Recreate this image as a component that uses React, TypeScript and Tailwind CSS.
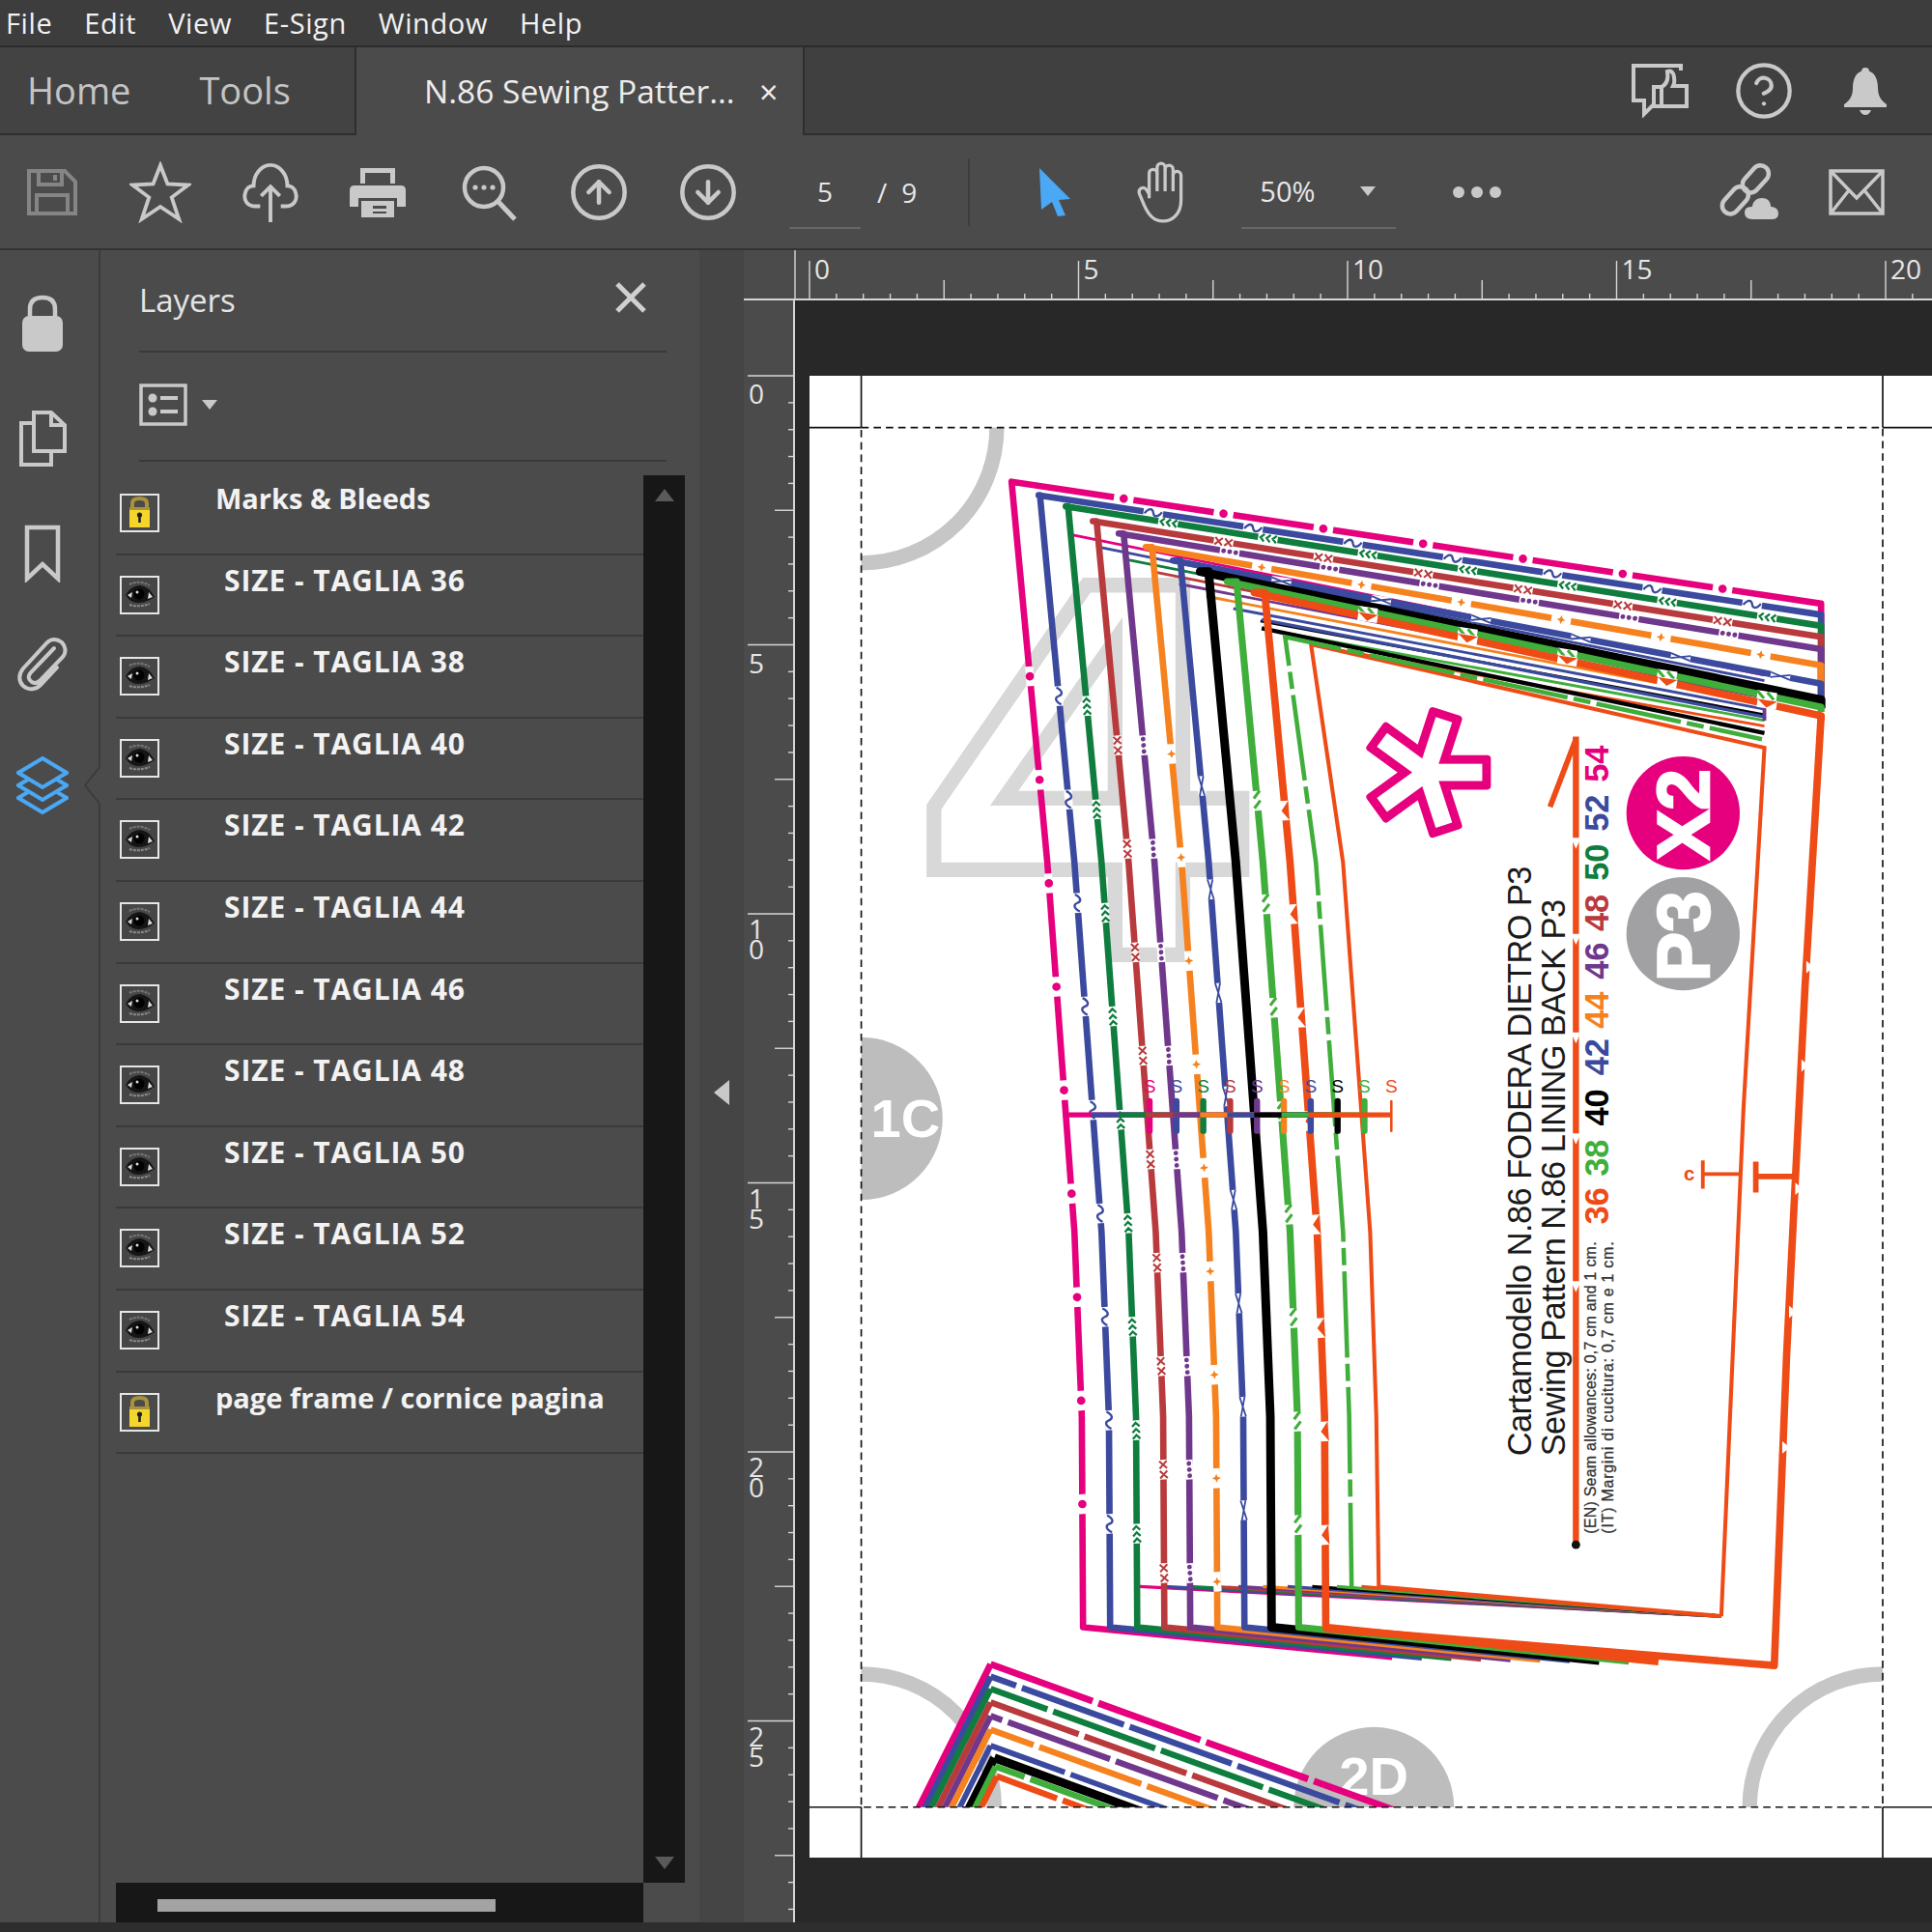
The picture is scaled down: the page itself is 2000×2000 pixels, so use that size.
import React from 'react';
import { CircleArrowDown, CircleArrowUp, CircleHelp } from 'lucide-react';

const MENU = ['File', 'Edit', 'View', 'E-Sign', 'Window', 'Help'];
const LAYERS = [36, 38, 40, 42, 44, 46, 48, 50, 52, 54];
const ICON = '#c9c9c9';

// pattern pieces are drawn in the coordinates of the page svg
const PINK = '#e6007e';
const BLUE = '#3b4a9e';
const GREEN = '#0f7d3e';
const BROWN = '#b83a3c';
const PURPLE = '#70388c';
const ORANGE = '#f5821f';
const BLACK = '#000000';
const LIME = '#3fae3a';
const RED = '#ee4b16';

const SIZES = [
  { n: 54, c: PINK, x: 821, y: 391, end: 490, w: 5.2, leftMark: 549, topMark: 912, mark: 'dot' },
  { n: 52, c: BLUE, x: 843, y: 402, end: 499, w: 5.2, leftMark: 565, topMark: 936, mark: 'tilde' },
  { n: 50, c: GREEN, x: 865, y: 411, end: 508, w: 5.2, leftMark: 573, topMark: 948, mark: 'chev' },
  { n: 48, c: BROWN, x: 887, y: 423, end: 517, w: 5.2, leftMark: 605, topMark: 993, mark: 'xx' },
  { n: 46, c: PURPLE, x: 908, y: 433, end: 527, w: 5.2, leftMark: 605, topMark: 998, mark: 'dots' },
  { n: 44, c: ORANGE, x: 930, y: 444, end: 540, w: 5.2, leftMark: 612, topMark: 1024, mark: 'star' },
  { n: 42, c: BLUE, x: 952, y: 455, end: 555, w: 5.2, leftMark: 638, topMark: 1040, mark: 'cross' },
  { n: 40, c: BLACK, x: 974, y: 464, end: 568, w: 7, leftMark: 0, topMark: 0, mark: '' },
  { n: 38, c: LIME, x: 996, y: 472, end: 574, w: 5.6, leftMark: 650, topMark: 1110, mark: 'slash' },
  { n: 36, c: RED, x: 1018, y: 481, end: 581, w: 6, leftMark: 658, topMark: 1110, mark: 'tri' },
];

// left edge of the biggest size, as x for a given y
const CURVE = [[391, 821], [700, 850], [1000, 872], [1150, 878], [1320, 879]];
const curveX = (y: number) => {
  for (let i = 0; i < CURVE.length - 1; i++) {
    const [y0, x0] = CURVE[i];
    const [y1, x1] = CURVE[i + 1];
    if (y <= y1) return x0 + ((y - y0) / (y1 - y0)) * (x1 - x0);
  }
  return 879;
};

const leftEdge = (dx: number, top: number, bottom: number) => {
  const ys = [bottom, 1150, 1000, 700, top].filter((y) => y <= bottom && y >= top);
  return ys.map((y) => `${curveX(y) + dx},${y}`).join(' ');
};

function Mark({ x, y, c, kind, w, angle }: { x: number; y: number; c: string; kind: string; w: number; angle: number }) {
  return (
    <g transform={`translate(${x} ${y}) rotate(${angle})`}>
      <rect x={-8} y={-w / 2 - 0.6} width={16} height={w + 1.2} fill="#fff" />
      {kind === 'dot' && <circle r={3.4} fill={c} />}
      {kind === 'tilde' && <path d="M-7 1.5 C-4 -3.5 -1 -3.5 0 0 S4 3.5 7 -1.5" fill="none" stroke={c} strokeWidth={1.8} />}
      {kind === 'chev' && <path d="M-3 -3 L-6 0 L-3 3 M2 -3 L-1 0 L2 3 M7 -3 L4 0 L7 3" fill="none" stroke={c} strokeWidth={1.8} />}
      {kind === 'xx' && <path d="M-7 -3 L-1 3 M-7 3 L-1 -3 M1 -3 L7 3 M1 3 L7 -3" fill="none" stroke={c} strokeWidth={1.6} />}
      {kind === 'dots' && (
        <g fill={c}>
          <circle cx={-5} r={1.9} />
          <circle r={1.9} />
          <circle cx={5} r={1.9} />
        </g>
      )}
      {kind === 'star' && <path d="M0 -3.6 L1.2 -1 L3.6 0 L1.2 1 L0 3.6 L-1.2 1 L-3.6 0 L-1.2 -1 Z" fill={c} />}
      {kind === 'cross' && <path d="M-8 -2 L8 2 M-8 2 L8 -2" fill="none" stroke={c} strokeWidth={1.4} />}
      {kind === 'slash' && <path d="M-8 -2.6 L-2 2.6 M0 -2.6 L6 2.6" fill="none" stroke={c} strokeWidth={2.4} />}
      {kind === 'tri' && <path d="M-8 -3 L8 -3 L0 3 Z" fill={c} />}
    </g>
  );
}

function SizeLine({ s, i }: { s: (typeof SIZES)[number]; i: number }) {
  const dx = s.x - 821;
  const slope = (s.end - s.y) / (1478 - s.x);
  const bottomEndX = 1130 + i * 24;
  const bottomEndY = 1345 + (i / 9) * 4;
  const left: number[] = [];
  if (s.mark) for (let y = s.leftMark; y < 1300; y += 84) left.push(y);
  const top: number[] = [];
  if (s.mark) for (let x = s.topMark; x < 1470; x += 81) top.push(x);
  return (
    <g>
      <polyline
        points={`${bottomEndX},${bottomEndY} ${leftEdge(dx, s.y, 1321)} ${s.x},${s.y} 1478,${s.end} 1478,${Math.max(s.end + 4, 575)}`}
        fill="none"
        stroke={s.c}
        strokeWidth={s.w}
        strokeLinejoin="round"
      />
      {left.map((y) => (
        <Mark key={`l${y}`} x={curveX(y) + dx} y={y} c={s.c} kind={s.mark} w={s.w} angle={86} />
      ))}
      {top.map((x) => (
        <Mark key={`t${x}`} x={x} y={s.y + (x - s.x) * slope} c={s.c} kind={s.mark} w={s.w} angle={8.6} />
      ))}
    </g>
  );
}

function NotchLine() {
  return (
    <g>
      {SIZES.map((s, i) => {
        const x = 933 + i * 21.8;
        const from = i === 0 ? 863 : 886 + (i - 1) * 22;
        return (
          <g key={s.n}>
            <line x1={from} y1={905} x2={x} y2={905} stroke={s.c} strokeWidth={4} />
            <line x1={x} y1={894} x2={x} y2={918} stroke={s.c} strokeWidth={i === 9 ? 2 : 5} strokeLinecap="round" />
            <text x={x} y={887} textAnchor="middle" fontSize={15} fill={s.c} className="font-['Liberation_Sans']">
              S
            </text>
          </g>
        );
      })}
    </g>
  );
}

function SecondPiece() {
  const rows = [
    [PINK, 1351, 5.5],
    [BLUE, 1361, 5],
    [GREEN, 1371, 5],
    [BROWN, 1382, 5],
    [PURPLE, 1393, 5],
    [ORANGE, 1404, 5],
    [BLUE, 1417, 4.5],
    [BLACK, 1427, 7],
    [LIME, 1434, 5],
    [RED, 1442, 5],
  ] as const;
  return (
    <g>
      {rows.map(([c, y, w], i) => {
        const cx = 804 + (i > 6 ? i - 4 : 0);
        return (
          <g key={i} fill="none" stroke={c} strokeWidth={w} strokeLinejoin="round">
            <line x1={cx} y1={y} x2={cx - 60} y2={y + 120} />
            <line x1={cx} y1={y} x2={1180} y2={y + 136} strokeDasharray={i === 7 ? undefined : '88 5'} strokeDashoffset={i * -27} />
          </g>
        );
      })}
    </g>
  );
}

function Asterisk() {
  const angles = [0, 72, 144, 216, 288];
  return (
    <g transform="translate(1158 627)">
      {angles.map((a) => (
        <rect key={a} x={0} y={-14} width={52} height={28} rx={3} fill={PINK} transform={`rotate(${a})`} />
      ))}
      {angles.map((a) => (
        <rect key={a} x={0} y={-7} width={45} height={14} fill="#fff" transform={`rotate(${a})`} />
      ))}
    </g>
  );
}

function PagePattern() {
  const sideNums = [
    [36, RED, 979],
    [38, LIME, 940],
    [40, BLACK, 899],
    [42, BLUE, 858],
    [44, ORANGE, 820],
    [46, PURPLE, 780],
    [48, BROWN, 741],
    [50, GREEN, 700],
    [52, BLUE, 660],
    [54, PINK, 620],
  ] as const;
  return (
    <svg viewBox="657 305 911 1203" preserveAspectRatio="none" className="block w-full h-full">
      <defs>
        <clipPath id="trim">
          <rect x={699} y={347} width={829} height={1120} />
        </clipPath>
      </defs>
      <g clipPath="url(#trim)">
        <circle cx={699} cy={347} r={110} fill="none" stroke="#c6c6c6" strokeWidth={12} />
        <circle cx={699} cy={1467} r={108} fill="none" stroke="#c6c6c6" strokeWidth={12} />
        <circle cx={1528} cy={1467} r={108} fill="none" stroke="#c6c6c6" strokeWidth={12} />
        <circle cx={699} cy={908} r={66} fill="#bdbdbd" />
        <text x={735} y={923} textAnchor="middle" fontSize={44} fontWeight={700} fill="#fff" className="font-['Liberation_Sans']">
          1C
        </text>
        <circle cx={1115} cy={1467} r={65} fill="#bdbdbd" />
        <text x={1115} y={1457} textAnchor="middle" fontSize={44} fontWeight={700} fill="#fff" className="font-['Liberation_Sans']">
          2D
        </text>
        <path
          d="M758 706 L758 655 L882 475 L960 475 L960 648 L1008 648 L1008 706 L960 706 L960 775 L905 775 L905 706 Z M815 648 L905 648 L905 520 Z"
          fill="none"
          stroke="#d8d8d8"
          strokeWidth={12}
        />

        {/* thin seam lines of every size */}
        {SIZES.map((s, i) => (
          <g key={s.n} fill="none" stroke={s.c} strokeWidth={2.2}>
            <line x1={869 + i * 22} y1={434 + i * 10} x2={1432} y2={548 + i * 4.6} />
            <line x1={925 + i * 20} y1={1288} x2={1397} y2={1312} strokeWidth={2.6} />
          </g>
        ))}
        <polyline points="1432,560 1432,585" fill="none" stroke={PURPLE} strokeWidth={3} />
        <line x1={1024} y1={510} x2={1432} y2={595} stroke={BLACK} strokeWidth={3.4} />
        <line x1={1024} y1={503} x2={1432} y2={582} stroke={BLUE} strokeWidth={2.6} />

        {SIZES.map((s, i) => (
          <SizeLine key={s.n} s={s} i={i} />
        ))}

        {/* inner cutting line */}
        <polyline
          points="1397,1312 1119,1288 1117,1150 1112,1000 1090,700 1064,523 1432,607 1415,900 1397,1312"
          fill="none"
          stroke={RED}
          strokeWidth={3.2}
        />
        <polyline points="1097,1290 1095,1150 1090,1000 1068,700 1043,517 1430,600" fill="none" stroke={LIME} strokeWidth={3.6} strokeDasharray="70 5 14 5" />
        <polyline points="1075,1322 1440,1352 1450,1100 1465,800 1478,581" fill="none" stroke={RED} strokeWidth={6} strokeLinejoin="round" />
        {[780, 860, 960, 1060, 1170].map((y) => (
          <path key={y} d={`M${1466 - (y - 780) * 0.05} ${y} l6 5 l-6 5 z`} fill="#fff" />
        ))}
        <NotchLine />

        <Asterisk />

        <circle cx={1366} cy={660} r={46} fill={PINK} />
        <text
          transform="translate(1387 661) rotate(-90)"
          textAnchor="middle"
          fontSize={60}
          fontWeight={700}
          fill="#fff"
          stroke="#fff"
          strokeWidth={2}
          className="font-['Liberation_Sans']"
        >
          X2
        </text>
        <circle cx={1366} cy={758} r={46} fill="#a1a1a4" />
        <text
          transform="translate(1387 760) rotate(-90)"
          textAnchor="middle"
          fontSize={60}
          fontWeight={700}
          fill="#fff"
          stroke="#fff"
          strokeWidth={2}
          className="font-['Liberation_Sans']"
        >
          P3
        </text>

        <g className="font-['Liberation_Sans']" fill="#1a1a1a">
          <text transform="translate(1243 1182) rotate(-90)" fontSize={27} textLength={479}>
            Cartamodello N.86 FODERA DIETRO P3
          </text>
          <text transform="translate(1270 1182) rotate(-90)" fontSize={27} textLength={452}>
            Sewing Pattern N.86 LINING BACK P3
          </text>
          <text transform="translate(1295 1245) rotate(-90)" fontSize={12.5} fill="#333" stroke="#333" strokeWidth={0.25} textLength={237}>
            (EN) Seam allowances: 0,7 cm and 1 cm.
          </text>
          <text transform="translate(1309 1245) rotate(-90)" fontSize={12.5} fill="#333" stroke="#333" strokeWidth={0.25} textLength={237}>
            (IT) Margini di cucitura: 0,7 cm e 1 cm.
          </text>
        </g>
        {sideNums.map(([n, c, y]) => (
          <text
            key={n}
            transform={`translate(1305 ${y}) rotate(-90)`}
            textAnchor="middle"
            fontSize={27}
            fontWeight={700}
            fill={c}
            className="font-['Liberation_Sans']"
          >
            {n}
          </text>
        ))}
        <line x1={1279} y1={1254} x2={1279} y2={598} stroke={RED} strokeWidth={5} />
        <line x1={1279} y1={600} x2={1258} y2={655} stroke={RED} strokeWidth={4.5} />
        <circle cx={1279} cy={1254} r={3.5} fill="#111" />
        {[1040, 920, 838, 758, 680].map((y) => (
          <path key={y} d={`M1275 ${y} l8 0 l-4 9 z`} fill="#fff" />
        ))}

        <g fill="none" stroke={RED}>
          <path d="M1382 942 V965 M1382 953 H1412" strokeWidth={3} />
          <path d="M1425 943 V968 M1425 955 H1455" strokeWidth={4.5} />
        </g>
        <text x={1371} y={958} textAnchor="middle" fontSize={16} fontWeight={700} fill={RED} className="font-['Liberation_Sans']">
          c
        </text>

        <SecondPiece />
      </g>
      <g fill="none" stroke="#111" strokeWidth={1.3}>
        <rect x={699} y={347} width={829} height={1120} strokeDasharray="6 4" />
        <path d="M699 305 V347 M1528 305 V347 M699 1467 V1508 M1528 1467 V1508 M657 347 H699 M1528 347 H1568 M657 1467 H699 M1528 1467 H1568" />
      </g>
    </svg>
  );
}

function TopRuler() {
  const ticks = Array.from({ length: 44 }, (_, i) => i);
  return (
    <svg width={1230} height={52} className="block">
      <g stroke="#d6d6d6" strokeWidth={1.4}>
        <line x1={0} y1={51} x2={1230} y2={51} strokeWidth={2} />
        <line x1={53} y1={0} x2={53} y2={51} />
        {ticks.map((i) => {
          const x = 68 + i * 27.85;
          const h = i % 10 === 0 ? 40 : i % 5 === 0 ? 20 : 6;
          return <line key={i} x1={x} y1={51 - h} x2={x} y2={51} />;
        })}
      </g>
      <g fill="#e6e6e6" fontSize={28} className="font-['Open_Sans']">
        {[0, 5, 10, 15, 20].map((n, i) => (
          <text key={n} x={73 + i * 278.5} y={30}>
            {n}
          </text>
        ))}
      </g>
    </svg>
  );
}

function SideRuler() {
  const ticks = Array.from({ length: 58 }, (_, i) => i);
  return (
    <svg width={53} height={1679} className="block">
      <g stroke="#d6d6d6" strokeWidth={1.4}>
        <line x1={52} y1={0} x2={52} y2={1679} strokeWidth={2} />
        {ticks.map((i) => {
          const y = 78 + i * 27.85;
          const w = i % 10 === 0 ? 48 : i % 5 === 0 ? 20 : 6;
          return <line key={i} x1={52 - w} y1={y} x2={52} y2={y} />;
        })}
      </g>
      <g fill="#e6e6e6" fontSize={28} className="font-['Open_Sans']" textAnchor="middle">
        {['0', '5', '10', '15', '20', '25'].map((n, i) => (
          <text key={n} x={13} y={i * 278.5 + 107}>
            {n.length === 2 ? (
              <>
                <tspan x={13} dy={-3}>
                  {n[0]}
                </tspan>
                <tspan x={13} dy={21}>
                  {n[1]}
                </tspan>
              </>
            ) : (
              n
            )}
          </text>
        ))}
      </g>
    </svg>
  );
}

const SaveIcon = () => (
  <svg width={54} height={52} viewBox="0 0 54 52" fill="none" stroke="#858585" strokeWidth={4}>
    <path d="M3 4 H40 L51 15 V48 H3 Z" />
    <path d="M13 4 V18 H37 V4 M30 8 V14 M11 48 V29 H43 V48" />
  </svg>
);

const StarIcon = () => (
  <svg width={64} height={64} viewBox="0 0 60 60" fill="none" stroke={ICON} strokeWidth={3.6} strokeLinejoin="miter">
    <path d="M30 4 L37 22 L57 23 L41 35 L48 56 L30 44 L12 56 L19 35 L3 23 L23 22 Z" />
  </svg>
);

const CloudUp = () => (
  <svg width={60} height={64} viewBox="0 0 60 66" fill="none" stroke={ICON} strokeWidth={4}>
    <path d="M19 48 H14 C5 48 1 41 3 34 C4 29 8 26 12 26 C12 14 20 4 30 4 C40 4 48 14 48 26 C52 26 56 29 57 34 C59 41 55 48 46 48 H41" />
    <path d="M30 65 V27 M20 37 L30 27 L40 37" />
  </svg>
);

const PrintIcon = () => (
  <svg width={60} height={54} viewBox="0 0 60 54" fill={ICON}>
    <path d="M12 2 H48 V18 H43 V7 H17 V18 H12 Z" />
    <path d="M6 20 H54 Q59 20 59 25 V42 H50 V33 H10 V42 H1 V25 Q1 20 6 20 Z" />
    <path fillRule="evenodd" d="M13 36 H47 V53 H13 Z M25 41 V44 H39 V41 Z M25 47 V49 H39 V47 Z" />
  </svg>
);

const SearchDots = () => (
  <svg width={60} height={60} viewBox="0 0 60 60" fill="none" stroke={ICON}>
    <circle cx={25} cy={25} r={20} strokeWidth={4.5} />
    <path d="M40 40 L57 58" strokeWidth={5} />
    <g fill={ICON} stroke="none">
      <circle cx={16} cy={25} r={2.6} />
      <circle cx={25} cy={25} r={2.6} />
      <circle cx={34} cy={25} r={2.6} />
    </g>
  </svg>
);

const PointerIcon = () => (
  <svg width={36} height={52} viewBox="0 0 36 52">
    <path d="M2 1 L34 33 L22 34 L29 50 L21 51 L15 36 L4 44 Z" fill="#4aa8f5" />
  </svg>
);

const HandIcon = () => (
  <svg width={58} height={66} viewBox="0 0 50 64" fill="none" stroke={ICON} strokeWidth={3.2} strokeLinejoin="round">
    <path d="M12 38 V13 a4 4 0 0 1 8 0 V7 a4 4 0 0 1 8 0 V9 a4 4 0 0 1 8 0 V15 a4 4 0 0 1 8 0 V40 C44 53 36 61 26 61 C16 61 11 54 7 45 L2 33 C1 28 6 26 9 29 L12 34" />
    <path d="M20 13 V31 M28 9 V31 M36 15 V31" />
  </svg>
);

const LinkCloud = () => (
  <svg width={66} height={62} viewBox="0 0 66 62" fill="none" stroke={ICON} strokeWidth={4.5}>
    <rect x={24} y={9} width={32} height={17} rx={8.5} transform="rotate(-48 40 17)" />
    <rect x={3} y={31} width={32} height={17} rx={8.5} transform="rotate(-48 19 39)" />
    <path d="M37 60 Q28 60 28 52 Q28 45 36 45 Q38 36 47 36 Q56 36 57 45 Q65 46 65 53 Q65 60 57 60 Z" fill={ICON} stroke="#4b4b4b" strokeWidth={2} />
  </svg>
);

const MailIcon = () => (
  <svg width={58} height={48} viewBox="0 0 58 48" fill="none" stroke={ICON} strokeWidth={3.5}>
    <rect x={2} y={2} width={54} height={44} />
    <path d="M2 2 L29 30 L56 2 M2 46 L21 22 M56 46 L37 22" />
  </svg>
);

const ThumbComment = () => (
  <svg width={60} height={56} viewBox="0 0 60 56" fill="none" stroke={ICON} strokeWidth={4}>
    <path d="M52 7 V2 H3 V38 H14 V52 L24 42" />
    <path d="M24 24 H32 V44 H24 Z M32 24 Q40 20 38 8 Q44 6 45 14 Q46 19 44 23 H58 V44 H32" />
  </svg>
);

const BellIcon = () => (
  <svg width={46} height={50} viewBox="0 0 46 50" fill={ICON}>
    <circle cx={23} cy={5} r={4} />
    <path d="M23 4 C32 4 36 12 36 22 C36 30 39 35 45 39 V42 H1 V39 C7 35 10 30 10 22 C10 12 14 4 23 4 Z" />
    <path d="M17 45 H29 Q27 50 23 50 Q19 50 17 45 Z" />
  </svg>
);

const NavLock = () => (
  <svg width={44} height={60} viewBox="0 0 44 60" fill={ICON}>
    <path d="M9 24 V15 Q9 3 22 3 Q35 3 35 15 V24" fill="none" stroke={ICON} strokeWidth={4.5} />
    <rect x={1} y={22} width={42} height={37} rx={7} />
  </svg>
);

const NavPages = () => (
  <svg width={50} height={58} viewBox="0 0 50 58" fill="none" stroke={ICON} strokeWidth={4}>
    <path d="M16 2 H34 L48 15 V42 H16 Z M34 2 V15 H48" />
    <path d="M16 13 H3 V56 H34 V42" />
  </svg>
);

const NavBookmark = () => (
  <svg width={38} height={60} viewBox="0 0 38 60" fill="none" stroke={ICON} strokeWidth={4.5}>
    <path d="M3 3 H35 V56 L19 41 L3 56 Z" />
  </svg>
);

const NavClip = () => (
  <svg width={52} height={58} viewBox="0 0 52 58" fill="none" stroke={ICON} strokeWidth={4} strokeLinecap="round">
    <path d="M38 12 L14 37 C10 42 12 45 15 47 C18 49 21 48 24 45 L47 21 C51 16 50 10 46 6 C41 2 35 2 31 6 L6 33 C1 39 1 46 6 51 C12 56 19 55 24 50 L41 32" />
  </svg>
);

const NavLayers = () => (
  <svg width={54} height={60} viewBox="0 0 54 60" fill="none" stroke="#4aa8f5" strokeWidth={4}>
    <path d="M27 2 L52 17 L27 32 L2 17 Z" />
    <path d="M12 24 L2 30 L27 45 L52 30 L42 24" />
    <path d="M12 37 L2 43 L27 58 L52 43 L42 37" />
  </svg>
);

const OptionsIcon = () => (
  <svg width={50} height={44} viewBox="0 0 50 44" fill="none" stroke={ICON} strokeWidth={3.5}>
    <rect x={2} y={2} width={46} height={40} />
    <g fill={ICON} stroke="none">
      <circle cx={14} cy={15} r={4.5} />
      <circle cx={14} cy={29} r={4.5} />
      <rect x={22} y={13} width={18} height={4} />
      <rect x={22} y={27} width={18} height={4} />
    </g>
  </svg>
);

const EyeBox = () => (
  <svg width={41} height={40} viewBox="0 0 41 40">
    <rect x={1} y={1} width={39} height={38} fill="#464646" stroke="#e6e6e6" strokeWidth={2} />
    <path d="M6 20 Q12 10 21 10 Q30 11 36 22 Q27 28 19 28 Q11 28 6 20 Z" fill="#151515" />
    <circle cx={20} cy={19} r={5.5} fill="#000" />
    <path d="M8 20 L13 17 L12 23 Z M30 17 L34 22 L29 24 Z" fill="#d8d8d8" />
    <circle cx={18} cy={17} r={1.5} fill="#ddd" />
    <path d="M10 30 Q20 33 31 29" stroke="#8a8a8a" strokeWidth={2} strokeDasharray="3 1" fill="none" />
    <path d="M10 9 Q20 4 31 10" stroke="#777" strokeWidth={2} strokeDasharray="3 1" fill="none" />
  </svg>
);

const LockBox = () => (
  <svg width={41} height={40} viewBox="0 0 41 40">
    <rect x={1} y={1} width={39} height={38} fill="#4a4a4a" stroke="#e6e6e6" strokeWidth={2} />
    <path d="M13 16 V10 Q13 5 20.5 5 Q28 5 28 10 V16" fill="none" stroke="#a8923a" strokeWidth={4} />
    <rect x={10} y={14} width={21} height={21} fill="#f3d52c" />
    <rect x={10} y={14} width={21} height={3} fill="#a8923a" />
    <circle cx={20.5} cy={22} r={2.6} fill="#222" />
    <rect x={19.2} y={22} width={2.6} height={8} fill="#222" />
  </svg>
);

function LayerRow({ label, locked, wide }: { label: string; locked?: boolean; wide?: boolean }) {
  return (
    <div className="h-[84.6px] border-b-2 border-[#3a3a3a] flex shrink-0">
      <div className="w-[4px]" />
      <div className="mt-[21px]">{locked ? <LockBox /> : <EyeBox />}</div>
      <div
        className={
          wide
            ? "ml-[67px] mt-[6px] font-['Open_Sans'] font-bold text-[30px] leading-[40px] tracking-[0.9px] text-[#f2f2f2] whitespace-nowrap"
            : "ml-[58px] mt-[6px] font-['Open_Sans'] font-bold text-[29px] leading-[40px] text-[#f2f2f2] whitespace-nowrap"
        }
      >
        {label}
      </div>
    </div>
  );
}

export default function App() {
  return (
    <div className="w-[2000px] h-[2000px] flex flex-col overflow-hidden bg-[#4b4b4b] font-['Open_Sans',sans-serif]">
      {/* menu bar */}
      <div className="h-[49px] shrink-0 flex items-center bg-[#3d3d3d] border-b-2 border-[#2c2c2c] pl-[6px] gap-[33px] text-[29px] text-[#f2f2f2] tracking-[0.6px]">
        {MENU.map((m) => (
          <span key={m}>{m}</span>
        ))}
      </div>

      {/* tab row */}
      <div className="h-[91px] shrink-0 flex bg-[#404040]">
        <div className="w-[369px] flex items-center pl-[28px] gap-[71px] bg-[#434343] border-r-2 border-b-2 border-[#2e2e2e] text-[38px] text-[#c4c4c4]">
          <span>Home</span>
          <span>Tools</span>
        </div>
        <div className="w-[462px] flex items-center pl-[70px] bg-[#4b4b4b] text-[33.5px] text-[#ececec]">
          <span className="w-[347px] whitespace-nowrap">N.86 Sewing Patter...</span>
          <span className="text-[34px] leading-none">×</span>
        </div>
        <div className="flex-1 flex items-center justify-end pr-[46px] border-l-2 border-b-2 border-[#2e2e2e]">
          <ThumbComment />
          <div className="ml-[46px] mr-[50px]"><CircleHelp size={64} color={ICON} strokeWidth={1.6} /></div>
          <BellIcon />
        </div>
      </div>

      {/* toolbar */}
      <div className="h-[119px] shrink-0 flex items-center bg-[#4b4b4b] border-b-2 border-[#333]">
        <div className="w-[108px] flex justify-center"><SaveIcon /></div>
        <div className="w-[116px] flex justify-center"><StarIcon /></div>
        <div className="w-[112px] flex justify-center"><CloudUp /></div>
        <div className="w-[110px] flex justify-center"><PrintIcon /></div>
        <div className="w-[120px] flex justify-center"><SearchDots /></div>
        <div className="w-[108px] flex justify-center"><CircleArrowUp size={64} color={ICON} strokeWidth={1.7} /></div>
        <div className="w-[118px] flex justify-center"><CircleArrowDown size={64} color={ICON} strokeWidth={1.7} /></div>
        <div className="ml-[25px] w-[74px] h-[76px] flex items-center justify-center border-b-2 border-[#666] text-[28px] text-[#e6e6e6]">5</div>
        <span className="ml-[17px] text-[28px] text-[#e6e6e6]">/</span>
        <span className="ml-[15px] text-[28px] text-[#e6e6e6]">9</span>
        <div className="ml-[53px] w-[2px] h-[70px] bg-[#3d3d3d]" />
        <div className="ml-[70px]"><PointerIcon /></div>
        <div className="ml-[64px]"><HandIcon /></div>
        <div className="ml-[53px] w-[160px] h-[76px] flex items-center border-b-2 border-[#666] pl-[19px] text-[29px] text-[#e6e6e6]">
          50%
          <span className="ml-[47px] w-0 h-0 border-x-[8px] border-x-transparent border-t-[10px] border-t-[#c9c9c9]" />
        </div>
        <div className="ml-[59px] flex gap-[7px]">
          <span className="w-[12px] h-[12px] rounded-full bg-[#c9c9c9]" />
          <span className="w-[12px] h-[12px] rounded-full bg-[#c9c9c9]" />
          <span className="w-[12px] h-[12px] rounded-full bg-[#c9c9c9]" />
        </div>
        <div className="ml-auto flex items-center gap-[50px] pr-[49px]">
          <LinkCloud />
          <MailIcon />
        </div>
      </div>

      {/* main */}
      <div className="h-[1731px] shrink-0 flex">
        <div className="w-[104px] shrink-0 relative border-r-2 border-[#3c3c3c] flex flex-col items-center pt-[46px] pr-[14px]">
          <NavLock />
          <div className="mt-[60px]"><NavPages /></div>
          <div className="mt-[60px]"><NavBookmark /></div>
          <div className="mt-[56px]"><NavClip /></div>
          <div className="mt-[66px]"><NavLayers /></div>
          <svg width={18} height={40} viewBox="0 0 18 40" className="absolute left-[86px] top-[534px]">
            <path d="M18 0 L2 20 L18 40" fill="#4b4b4b" stroke="#3c3c3c" strokeWidth={2} />
          </svg>
        </div>

        <div className="w-[620px] shrink-0 flex flex-col">
          <div className="ml-[40px] mr-[34px] h-[106px] shrink-0 flex items-center justify-between border-b-2 border-[#3a3a3a] pr-[20px]">
            <span className="text-[33px] text-[#e4e4e4]">Layers</span>
            <svg width={34} height={34} viewBox="0 0 34 34" className="mb-[6px]">
              <path d="M3 3 L31 31 M31 3 L3 31" stroke="#d0d0d0" strokeWidth={5} />
            </svg>
          </div>
          <div className="ml-[40px] mr-[34px] h-[113px] shrink-0 flex items-center gap-[15px] border-b-2 border-[#3a3a3a] pb-[4px]">
            <OptionsIcon />
            <span className="w-0 h-0 border-x-[8px] border-x-transparent border-t-[10px] border-t-[#c9c9c9]" />
          </div>
          <div className="flex-1 flex flex-col min-h-0 pl-[16px]">
            <div className="flex-1 flex min-h-0">
              <div className="w-[546px] flex flex-col pt-[12px]">
                <LayerRow label="Marks & Bleeds" locked />
                {LAYERS.map((n) => (
                  <LayerRow key={n} label={`SIZE - TAGLIA ${n}`} wide />
                ))}
                <LayerRow label="page frame / cornice pagina" locked />
              </div>
              <div className="w-[43px] mt-[14px] bg-[#171717] flex flex-col items-center justify-between py-[14px]">
                <span className="w-0 h-0 border-x-[10px] border-x-transparent border-b-[13px] border-b-[#5a5a5a]" />
                <span className="w-0 h-0 border-x-[10px] border-x-transparent border-t-[13px] border-t-[#5a5a5a]" />
              </div>
            </div>
            <div className="h-[41px] w-[546px] shrink-0 bg-[#171717] flex items-center pl-[43px]">
              <div className="w-[350px] h-[13px] mt-[6px] bg-[#a3a3a3]" />
            </div>
          </div>
        </div>

        <div className="w-[46px] shrink-0 bg-[#454545] flex items-center justify-center">
          <span className="w-0 h-0 border-y-[13px] border-y-transparent border-r-[16px] border-r-[#c9c9c9] mt-[12px]" />
        </div>

        <div className="flex-1 flex flex-col min-w-0">
          <TopRuler />
          <div className="flex-1 flex min-h-0">
            <SideRuler />
            <div className="flex-1 bg-[#282828] pl-[15px] pt-[78px]">
              <div className="h-[1534px] bg-white">
                <PagePattern />
              </div>
            </div>
          </div>
        </div>
      </div>
      <div className="flex-1 bg-[#2e2e2e]" />
    </div>
  );
}
